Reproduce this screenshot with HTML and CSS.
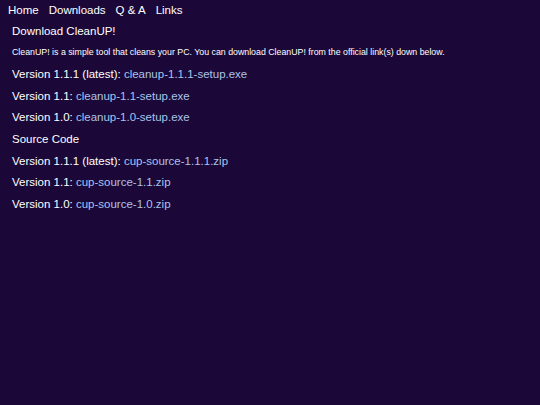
FILE: index.html
```html
<!DOCTYPE html>
<html>
<head>
<meta charset="utf-8">
<link rel="stylesheet" href="styles.css">
</head>
<body>
<nav class="nav">
  <a href="#">Home</a>
  <a href="#">Downloads</a>
  <a href="#">Q &amp; A</a>
  <a href="#">Links</a>
</nav>
<main class="content">
  <h2 class="title">Download CleanUP!</h2>
  <p class="intro">CleanUP! is a simple tool that cleans your PC. You can download CleanUP! from the official link(s) down below.</p>
  <p class="row">Version 1.1.1 (latest): <a href="#">cleanup-1.1.1-setup.exe</a></p>
  <p class="row">Version 1.1: <a href="#">cleanup-1.1-setup.exe</a></p>
  <p class="row">Version 1.0: <a href="#">cleanup-1.0-setup.exe</a></p>
  <h2 class="title">Source Code</h2>
  <p class="row">Version 1.1.1 (latest): <a href="#">cup-source-1.1.1.zip</a></p>
  <p class="row">Version 1.1: <a href="#">cup-source-1.1.zip</a></p>
  <p class="row">Version 1.0: <a href="#">cup-source-1.0.zip</a></p>
</main>
</body>
</html>
```
FILE: styles.css
```css
html, body {
  margin: 0;
  padding: 0;
  background: #1b0838;
  color: #ffffff;
  font-family: "Liberation Sans", Arial, sans-serif;
}
.nav {
  display: flex;
  gap: 10px;
  padding: 3px 8px 0;
  font-size: 11.5px;
  line-height: 14px;
}
.nav a {
  color: #ffffff;
  text-decoration: none;
}
.content {
  padding: 0 12px;
}
.title {
  font-size: 11.5px;
  font-weight: normal;
  margin: 0;
  line-height: 21.7px;
}
.content > .title:first-child {
  margin-top: 3.5px;
}
.intro {
  font-size: 8.8px;
  margin: 0;
  line-height: 21.7px;
}
.row {
  margin: 0;
  font-size: 11.5px;
  line-height: 21.7px;
}
.row a {
  color: #a9c4ea;
  text-decoration: none;
}
```
